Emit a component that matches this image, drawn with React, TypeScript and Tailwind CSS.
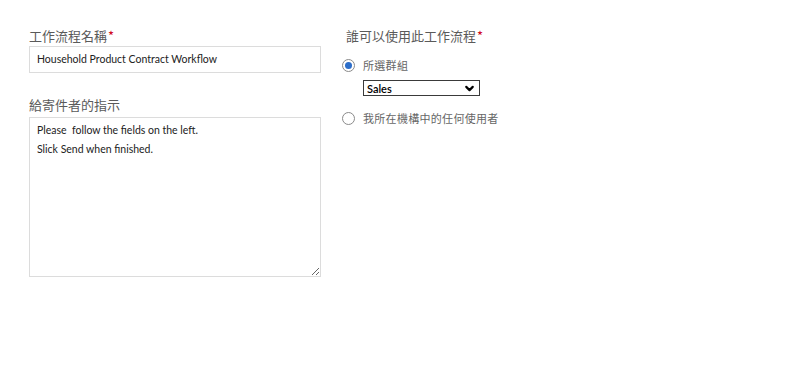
import { ChevronDown } from "lucide-react";

const cjk = "font-['Segoe_UI','Noto_Sans_CJK_TC',sans-serif]";

function Radio({ checked }: { checked?: boolean }) {
  return (
    <span className="flex h-[13px] w-[13px] shrink-0 items-center justify-center rounded-full border border-[#8a8a8a] bg-white">
      {checked && <span className="h-[7px] w-[7px] rounded-full bg-[#2d6ec9]" />}
    </span>
  );
}

export default function App() {
  return (
    <main className={`flex min-h-[372px] w-[795px] gap-[21px] bg-white pl-[29px] pt-[27px] ${cjk}`}>
      {/* left column */}
      <div className="flex w-[292px] flex-col">
        <label className="text-[13px] leading-[17px] text-[#5a5a5a]">
          工作流程名稱<span className="ml-[1px] text-[#d0021b]">*</span>
        </label>
        <div className="mt-[2px] flex h-[27px] items-center border border-[#dcdcdc] px-[7px] pt-[1px] font-['Lato',sans-serif] text-[10.5px] text-[#222]">
          Household Product Contract Workflow
        </div>

        <label className="mt-[23px] text-[13px] leading-[17px] text-[#5a5a5a]">給寄件者的指示</label>
        <textarea
          className="mt-[4px] h-[160px] resize border border-[#dcdcdc] px-[7px] pt-[3px] font-['Lato',sans-serif] text-[10.5px] leading-[19px] text-[#222] outline-none"
          defaultValue={"Please  follow the fields on the left.\nSlick Send when finished."}
        />
      </div>

      {/* right column */}
      <div className="flex flex-col">
        <label className="pl-[4px] text-[13px] leading-[17px] text-[#5a5a5a]">
          誰可以使用此工作流程<span className="ml-[1px] text-[#d0021b]">*</span>
        </label>
        <div className="mt-[14px] flex items-center gap-[8px]">
          <Radio checked />
          <span className="text-[11px] leading-[14px] tracking-[0.3px] text-[#666]">所選群組</span>
        </div>
        <div className="ml-[21px] mt-[8px] flex h-[16px] w-[117px] items-center justify-between border border-[#3a3a3a] pl-[3px] pr-[3px] font-['Lato',sans-serif] text-[11px] font-semibold text-black">
          <span className="leading-none">Sales</span>
          <ChevronDown size={13} strokeWidth={4} />
        </div>
        <div className="mt-[15px] flex items-center gap-[8px]">
          <Radio />
          <span className="text-[11px] leading-[14px] tracking-[0.3px] text-[#666]">我所在機構中的任何使用者</span>
        </div>
      </div>
    </main>
  );
}
